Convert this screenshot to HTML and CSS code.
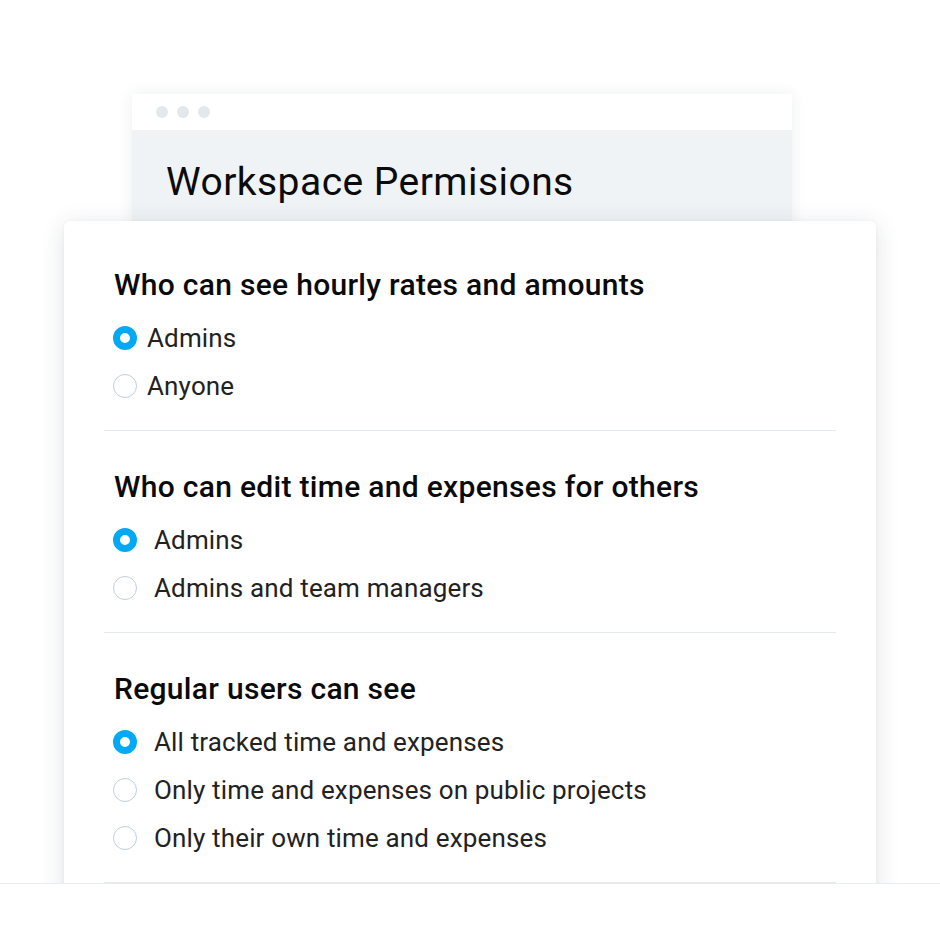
FILE: index.html
```html
<!DOCTYPE html>
<html>
<head>
<meta charset="utf-8">
<link rel="stylesheet" href="styles.css">
</head>
<body>
<div class="stage">
  <div class="back-window">
    <div class="titlebar">
      <span class="dot"></span><span class="dot"></span><span class="dot"></span>
    </div>
    <div class="back-header">
      <h1 class="title">Workspace Permisions</h1>
    </div>
  </div>
  <div class="card">
    <section class="section">
      <h2 class="heading">Who can see hourly rates and amounts</h2>
      <div class="options tight">
        <div class="option"><span class="radio checked"></span><span class="label">Admins</span></div>
        <div class="option"><span class="radio"></span><span class="label">Anyone</span></div>
      </div>
    </section>
    <section class="section">
      <h2 class="heading">Who can edit time and expenses for others</h2>
      <div class="options">
        <div class="option"><span class="radio checked"></span><span class="label">Admins</span></div>
        <div class="option"><span class="radio"></span><span class="label">Admins and team managers</span></div>
      </div>
    </section>
    <section class="section">
      <h2 class="heading">Regular users can see</h2>
      <div class="options">
        <div class="option"><span class="radio checked"></span><span class="label">All tracked time and expenses</span></div>
        <div class="option"><span class="radio"></span><span class="label">Only time and expenses on public projects</span></div>
        <div class="option"><span class="radio"></span><span class="label">Only their own time and expenses</span></div>
      </div>
    </section>
  </div>
</div>
<div class="footer"></div>
</body>
</html>
```

FILE: styles.css
```css
* { box-sizing: border-box; }
html, body { margin: 0; padding: 0; background: #fff; }
body { font-family: Roboto, "Noto Sans", sans-serif; width: 940px; height: 933px; overflow: hidden; }

.stage {
  height: 883px;
  overflow: hidden;
  padding-top: 94px;
}

.back-window {
  margin-left: 132px;
  width: 660px;
  background: #fff;
  box-shadow: 0 0 14px rgba(30, 50, 70, 0.08);
}
.titlebar {
  height: 36px;
  display: flex;
  align-items: center;
  gap: 9px;
  padding-left: 24px;
}
.dot {
  width: 12px; height: 12px; border-radius: 50%;
  background: #e3e8ed;
}
.back-header {
  height: 100px;
  background: #eff3f6;
  padding: 30px 0 0 34px;
}
.title {
  margin: 0;
  font-size: 39px;
  font-weight: 400;
  line-height: 44px;
  color: #0b0b0b;
  letter-spacing: 0.45px;
}

.card {
  position: relative;
  margin-top: -9px;
  margin-left: 64px;
  width: 812px;
  height: 720px;
  background: #fff;
  border-radius: 6px;
  box-shadow: 0 4px 24px rgba(40, 60, 80, 0.14), 0 1px 4px rgba(40, 60, 80, 0.05);
  padding: 0 40px;
}

.section {
  padding: 40px 9px 20px;
  border-bottom: 1px solid #e4e9ee;
}
.section:first-child { padding-top: 48px; }

.heading {
  margin: 0 0 13px;
  font-size: 30px;
  line-height: 32px;
  font-weight: 500;
  color: #0a0a0a;
  letter-spacing: 0.3px;
  padding-left: 1px;
}

.option {
  height: 48px;
  display: flex;
  align-items: center;
  gap: 17px;
}
.options.tight .option { gap: 10px; }

.radio {
  width: 24px; height: 24px;
  border-radius: 50%;
  border: 1.5px solid #c2cfd9;
  background: #fff;
  flex: none;
}
.radio.checked {
  border: 7px solid #03a9f4;
}
.label {
  font-size: 26px;
  color: #222;
  line-height: 30px;
  letter-spacing: 0.15px;
}

.footer {
  height: 50px;
  border-top: 1px solid #e8ecf0;
  background: #fff;
}
```
